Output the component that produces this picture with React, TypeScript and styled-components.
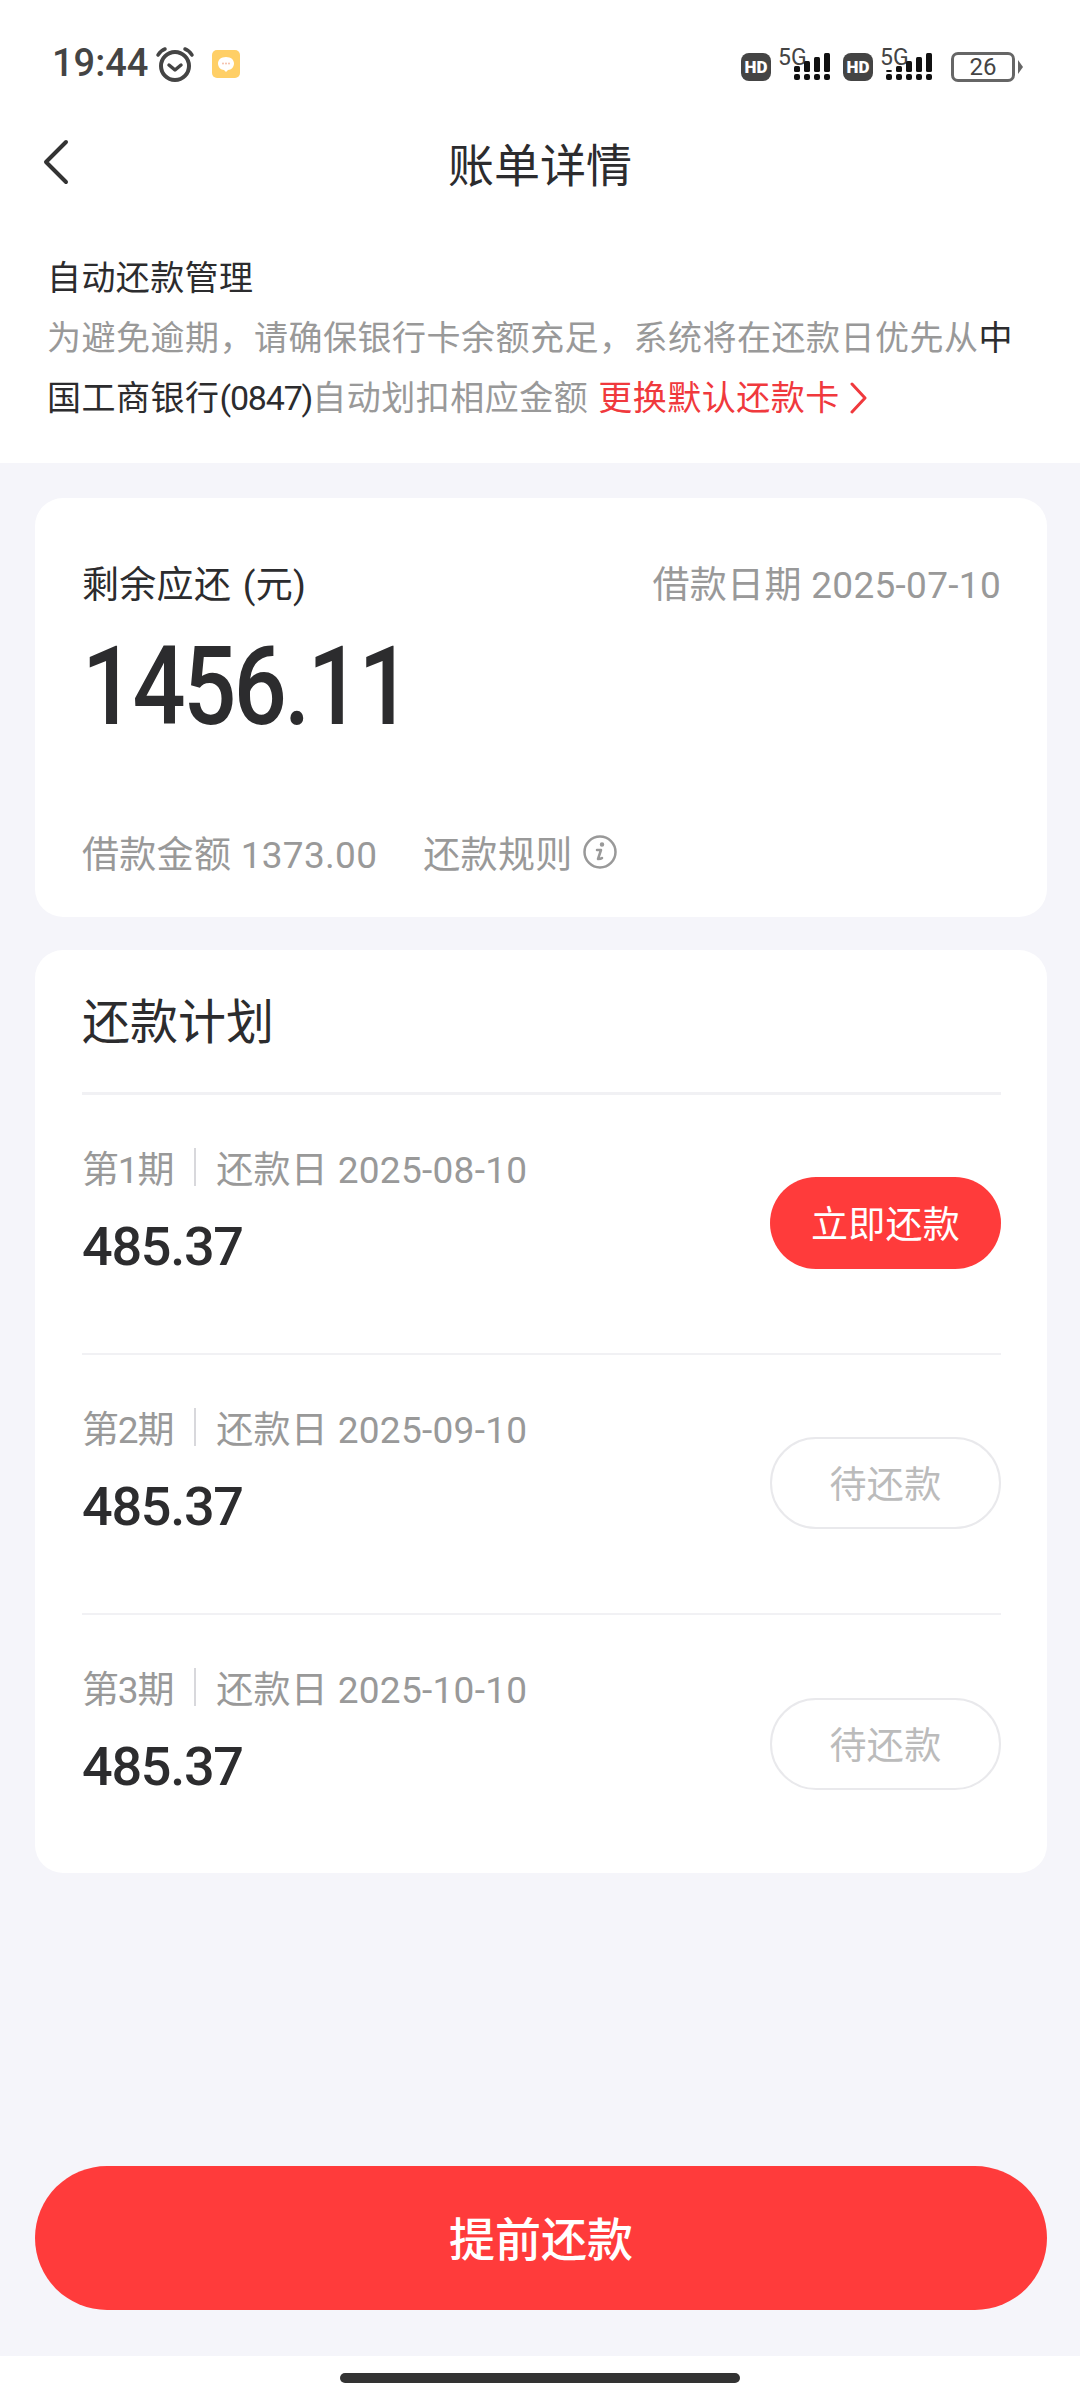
import styled, { createGlobalStyle } from "styled-components";

const CJK = `Roboto, "Noto Sans CJK SC", sans-serif`;

const plan = [
  { id: 1, date: "2025-08-10", amount: "485.37", active: true },
  { id: 2, date: "2025-09-10", amount: "485.37", active: false },
  { id: 3, date: "2025-10-10", amount: "485.37", active: false },
];

const GlobalStyle = createGlobalStyle`
  html, body {
    margin: 0;
    padding: 0;
    background: #fff;
    font-family: ${CJK};
  }
  * { box-sizing: border-box; }
`;

const Page = styled.div`
  width: 1080px;
  height: 2400px;
  display: flex;
  flex-direction: column;
  background: #fff;
  overflow: hidden;
`;

const StatusBar = styled.div`
  height: 126px;
  flex: none;
  display: flex;
  align-items: flex-start;
  justify-content: space-between;
  padding: 46px 65px 0 52px;
`;

const StatusLeft = styled.div`
  display: flex;
  align-items: center;
  height: 35px;
`;

const Clock = styled.span`
  font-size: 38px;
  line-height: 37px;
  font-weight: 500;
  color: #444;
  width: 103px;
`;

const StatusRight = styled.div`
  display: flex;
  align-items: center;
  height: 35px;
  margin-top: 3px;
`;

const HdBadge = styled.span`
  width: 30px;
  height: 28px;
  border-radius: 8px;
  background: #444;
  color: #fff;
  font-size: 17px;
  font-weight: 900;
  line-height: 28px;
  text-align: center;
  margin-left: ${(p: { $gap: number }) => p.$gap}px;
`;

const Signal = styled.span`
  position: relative;
  display: block;
  width: 59px;
  height: 35px;

  svg {
    position: absolute;
    right: 0;
    top: 3px;
  }
`;

const FiveG = styled.span`
  position: absolute;
  left: 7px;
  top: -3px;
  font-size: 23px;
  line-height: 24px;
  color: #444;
`;

const Battery = styled.span`
  width: 64px;
  height: 30px;
  margin-left: 19px;
  border: 3px solid #666;
  border-radius: 7px;
  font-size: 24px;
  line-height: 25px;
  color: #444;
  text-align: center;
  position: relative;

  &::after {
    content: "";
    position: absolute;
    right: -11px;
    top: 5px;
    border-left: 5px solid #666;
    border-top: 7px solid transparent;
    border-bottom: 7px solid transparent;
  }
`;

const NavBar = styled.div`
  height: 72px;
  flex: none;
  display: flex;
  align-items: center;
  justify-content: center;
  position: relative;
  font-size: 46px;
  color: #2c2c2e;
`;

const BackIcon = styled.svg`
  position: absolute;
  left: 41px;
  top: 13px;
`;

const Notice = styled.div`
  flex: none;
  height: 265px;
  padding: 50px 50px 0 47px;
`;

const NoticeTitle = styled.div`
  font-size: 34px;
  line-height: 60px;
  letter-spacing: 0.4px;
  color: #2c2c2e;
`;

const NoticeText = styled.div`
  font-size: 34px;
  line-height: 60px;
  letter-spacing: 0.5px;
  color: #999;
`;

const Dark = styled.span`
  color: #2c2c2e;
`;

const BankTail = styled.span`
  letter-spacing: -1.2px;
`;

const RedLink = styled.span`
  color: #f0393d;
  margin-left: 10px;
`;

const LinkArrow = styled.svg`
  margin-left: 8px;
  vertical-align: -4px;
`;

const Main = styled.div`
  flex: 1;
  display: flex;
  flex-direction: column;
  gap: 33px;
  padding: 35px 33px 46px 35px;
  background: #f5f5fa;
`;

const Card = styled.div`
  background: #fff;
  border-radius: 28px;
  padding: 0 46px 0 47px;
`;

const SummaryCard = styled(Card)`
  height: 419px;
  padding-top: 59px;
`;

const SummaryTop = styled.div`
  display: flex;
  justify-content: space-between;
  align-items: center;
  height: 50px;
`;

const SummaryLabel = styled.span`
  font-size: 37px;
  word-spacing: 2px;
  letter-spacing: 0.3px;
  color: #2c2c2e;
`;

const Muted = styled.span`
  font-size: 37px;
  letter-spacing: 0.3px;
  color: #999;
  white-space: pre;
`;

const BigAmount = styled.div`
  font-size: 110px;
  line-height: 110px;
  font-weight: 500;
  color: #2c2c2e;
  margin-top: 25px;
  transform: scaleX(0.85);
  transform-origin: left center;
  letter-spacing: -3px;
`;

const SummaryBottom = styled.div`
  display: flex;
  align-items: center;
  height: 50px;
  margin-top: 85px;
`;

const RuleLabel = styled(Muted)`
  margin-left: 46px;
`;

const InfoIcon = styled.svg`
  margin-left: 9px;
`;

const PlanCard = styled(Card)`
  height: 923px;
  overflow: hidden;
`;

const PlanTitle = styled.div`
  height: 145px;
  padding-top: 38px;
  font-size: 48px;
  line-height: 70px;
  color: #2c2c2e;
  border-bottom: 3px solid #f1f1f4;
`;

const Row = styled.div`
  height: 260px;
  display: flex;
  justify-content: space-between;
  align-items: center;
  border-bottom: ${(p: { $last?: boolean }) => (p.$last ? "none" : "2px solid #f1f1f4")};
`;

const RowInfo = styled.div`
  display: flex;
  flex-direction: column;
  height: 100%;
  padding-top: 47px;
`;

const RowMeta = styled.div`
  display: flex;
  align-items: center;
  height: 50px;
`;

const Period = styled(Muted)`
  letter-spacing: -1.2px;
`;

const MetaSplit = styled.span`
  width: 2px;
  height: 38px;
  background: #d8d8dc;
  margin: 0 20px 0 21px;
`;

const RowAmount = styled.div`
  font-size: 54px;
  line-height: 60px;
  font-weight: 500;
  color: #2c2c2e;
  margin-top: 25px;
  letter-spacing: -1.3px;
`;

const PayButton = styled.div<{ $active: boolean }>`
  width: 231px;
  height: 92px;
  margin-bottom: 2px;
  border-radius: 46px;
  display: flex;
  align-items: center;
  justify-content: center;
  padding-bottom: 2px;
  font-size: 37px;
  letter-spacing: 0.3px;
  background: ${(p) => (p.$active ? "#ff3b3b" : "#fff")};
  color: ${(p) => (p.$active ? "#fff" : "#bbb")};
  border: ${(p) => (p.$active ? "none" : "2px solid #e9e9ec")};
`;

const PrepayButton = styled.div`
  margin-top: auto;
  height: 144px;
  padding-bottom: 4px;
  border-radius: 72px;
  background: #ff3b3b;
  color: #fff;
  font-size: 46px;
  font-weight: 500;
  display: flex;
  align-items: center;
  justify-content: center;
`;

const HomeArea = styled.div`
  flex: none;
  height: 44px;
  display: flex;
  justify-content: center;
  padding-top: 17px;
`;

const HomeBar = styled.div`
  width: 400px;
  height: 10px;
  border-radius: 5px;
  background: #333;
`;

const AlarmIcon = () => (
  <svg width="40" height="36" viewBox="0 0 40 36" fill="none" stroke="#444" strokeLinecap="round">
    <circle cx="20" cy="20" r="14" strokeWidth="4" />
    <path d="M14 19l6 5 6-5" strokeWidth="3.5" strokeLinejoin="round" />
    <path d="M3 9c2-3 4-5 7-6M37 9c-2-3-4-5-7-6" strokeWidth="3.5" />
  </svg>
);

const MessageIcon = () => (
  <svg width="28" height="28" viewBox="0 0 28 28" style={{ marginLeft: 17 }}>
    <rect width="28" height="28" rx="5" fill="#ffcf66" />
    <path d="M14 7c5 0 8 2.800 8 6.500S19 20 16 20l-2 2-2-2c-3 0-6-2.800-6-6.500S9 7 14 7z" fill="#fff" />
    <circle cx="11" cy="13.500" r="0.900" fill="#f3b9a0" />
    <circle cx="14" cy="13.500" r="0.900" fill="#f3b9a0" />
    <circle cx="17" cy="13.500" r="0.900" fill="#f3b9a0" />
  </svg>
);

const SignalBars = ({ full }: { full: boolean }) => {
  // bottom row of dots, with bars rising above them
  const xs = full ? [0, 10, 20, 30, 40] : [10, 20, 30, 40];
  const tops = [17, 13, 8, 4, 0];
  return (
    <svg width="46" height="28" viewBox="0 0 46 28" fill="#111">
      {xs.map((x) => {
        const top = tops[x / 10];
        return (
          <g key={x}>
            <rect x={x} y={22} width="6" height="6" rx="2" />
            <rect x={x} y={top + 1} width="6" height={19 - top} rx="1.500" />
          </g>
        );
      })}
    </svg>
  );
};

const App = () => {
  return (
    <Page>
      <GlobalStyle />
      <StatusBar>
        <StatusLeft>
          <Clock>19:44</Clock>
          <AlarmIcon />
          <MessageIcon />
        </StatusLeft>
        <StatusRight>
          <HdBadge $gap={0}>HD</HdBadge>
          <Signal>
            <FiveG>5G</FiveG>
            <SignalBars full={false} />
          </Signal>
          <HdBadge $gap={13}>HD</HdBadge>
          <Signal>
            <FiveG>5G</FiveG>
            <SignalBars full={true} />
          </Signal>
          <Battery>26</Battery>
        </StatusRight>
      </StatusBar>

      <NavBar>
        <BackIcon width="30" height="46" viewBox="0 0 30 46" fill="none" stroke="#333" strokeWidth="4" strokeLinecap="round" strokeLinejoin="round">
          <path d="M25 3L5 23l20 20" />
        </BackIcon>
        账单详情
      </NavBar>

      <Notice>
        <NoticeTitle>自动还款管理</NoticeTitle>
        <NoticeText>
          为避免逾期，请确保银行卡余额充足，系统将在还款日优先从<Dark>中国工商银行<BankTail>(0847)</BankTail></Dark>自动划扣相应金额
          <RedLink>
            更换默认还款卡
            <LinkArrow width="20" height="32" viewBox="0 0 20 32" fill="none" stroke="#f0393d" strokeWidth="3" strokeLinecap="round" strokeLinejoin="round">
              <path d="M4 2l13 14L4 30" />
            </LinkArrow>
          </RedLink>
        </NoticeText>
      </Notice>

      <Main>
        <SummaryCard>
          <SummaryTop>
            <SummaryLabel>剩余应还 (元)</SummaryLabel>
            <Muted>借款日期 2025-07-10</Muted>
          </SummaryTop>
          <BigAmount>1456.11</BigAmount>
          <SummaryBottom>
            <Muted>借款金额 1373.00</Muted>
            <RuleLabel>还款规则</RuleLabel>
            <InfoIcon width="36" height="36" viewBox="0 0 36 36" fill="none" stroke="#999" strokeWidth="2.500">
              <circle cx="18" cy="18" r="15.500" />
              <path d="M15 16h4l-3 9c2 0 3 0 4-1" strokeLinecap="round" strokeLinejoin="round" />
              <circle cx="20" cy="10.500" r="1" fill="#999" />
            </InfoIcon>
          </SummaryBottom>
        </SummaryCard>

        <PlanCard>
          <PlanTitle>还款计划</PlanTitle>
          {plan.map((item, index) => (
            <Row key={item.id} $last={index === plan.length - 1}>
              <RowInfo>
                <RowMeta>
                  <Period>第{item.id}期</Period>
                  <MetaSplit />
                  <Muted>还款日 {item.date}</Muted>
                </RowMeta>
                <RowAmount>{item.amount}</RowAmount>
              </RowInfo>
              <PayButton $active={item.active}>{item.active ? "立即还款" : "待还款"}</PayButton>
            </Row>
          ))}
        </PlanCard>

        <PrepayButton>提前还款</PrepayButton>
      </Main>

      <HomeArea>
        <HomeBar />
      </HomeArea>
    </Page>
  );
};

export default App;
